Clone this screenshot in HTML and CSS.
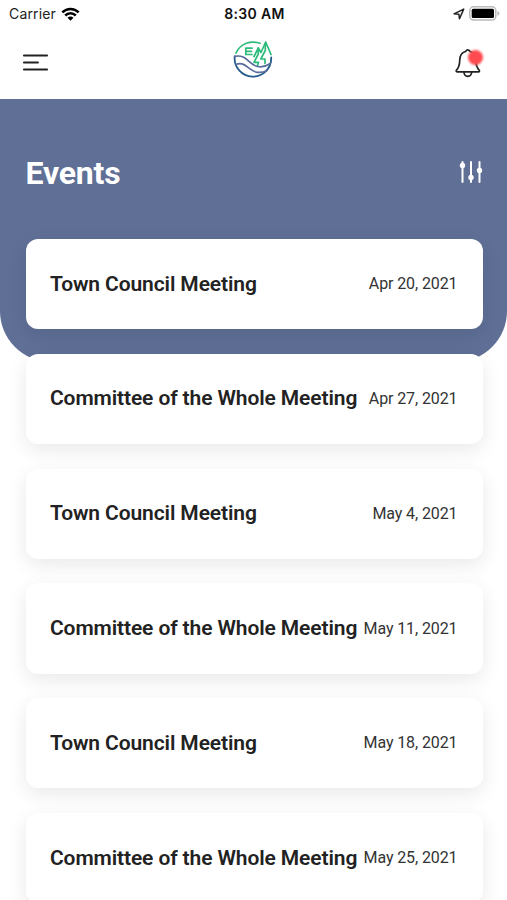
FILE: index.html
```html
<!DOCTYPE html>
<html lang="en">
<head>
  <meta charset="UTF-8" />
  <title>Events</title>
  <meta name="viewport" content="width=device-width, initial-scale=1.0"/>
  <link rel="stylesheet" href="styles.css">
</head>
<body>

  <!-- Status Bar -->
  <div class="status-bar">
    <div class="carrier">
      <span>Carrier</span>
      <svg class="wifi" viewBox="0 0 19 14" width="19" height="14">
        <g fill="none" stroke="#000" stroke-width="2.5">
          <path d="M1.300 5.400C6 .7 13 .7 17.700 5.400"/>
          <path d="M4.200 8.500C7.200 5.500 11.800 5.500 14.800 8.500"/>
        </g>
        <path d="M6.500 10.700Q9.500 8.300 12.500 10.700L9.500 13.700Z"/>
      </svg>
    </div>
    <div class="time">8:30 AM</div>
    <div class="indicators">
      <svg viewBox="0 0 12 12" width="12" height="12">
        <path d="M1 5.800 10.700 1.100 6.500 10.800 5.900 6.300Z" fill="none" stroke="#222" stroke-width="1.500" stroke-linejoin="round"/>
      </svg>
      <svg viewBox="0 0 31 15" width="31" height="15">
        <rect x=".8" y=".8" width="26" height="13.200" rx="3.800" fill="#fff" stroke="#bbb" stroke-width="1.500"/>
        <rect x="2.700" y="2.700" width="22.300" height="9.300" rx="1.500" fill="#000"/>
        <path d="M28.400 5Q30.500 5.800 30.500 7.400T28.400 9.800Z" fill="#bbb"/>
      </svg>
    </div>
  </div>

  <!-- Header -->
  <header>
    <svg class="menu-icon" viewBox="0 0 25 18" width="25" height="18">
      <path d="M.8 1.500H24.200M.8 8.500H15M.8 15.500H24.200" fill="none" stroke="#222" stroke-width="1.800" stroke-linecap="round"/>
    </svg>
    <svg class="brand-logo" viewBox="0 0 40 40" width="40" height="40">
      <g fill="none" stroke="#2dbb7c" stroke-width="1.700" stroke-linejoin="round" stroke-linecap="round">
        <path d="M3 13C7.500 3 18 .2 27 3.300"/>
        <path d="M19 8.200H12.800V14.500H19M12.800 11.300H18.500"/>
        <path d="M21 16.500 25.300 8V14L21 22.300H25.500L24.500 25.500"/>
        <path d="M25.300 8 28 12.500 32.700 2 38 14.500"/>
        <path d="M32.300 3.500V10.500L27.800 19H32V23.500"/>
      </g>
      <path d="M1.700 16.500A18.300 18.300 0 1 0 38.200 17.500" fill="none" stroke="#235a89" stroke-width="1.800" stroke-linecap="round"/>
      <g fill="none" stroke="#596c9c" stroke-width="1.700" stroke-linecap="round">
        <path d="M1.700 16.300C14 14 15 24.500 24.500 26.500Q31 27.800 37.300 23.500"/>
        <path d="M3 24.500C12 20.500 15.500 31 24 32.300Q29.500 33 34 30.500"/>
      </g>
    </svg>
    <div class="bell">
      <svg viewBox="0 0 26 30" width="26" height="30">
        <g fill="none" stroke="#222" stroke-width="1.700" stroke-linecap="round" stroke-linejoin="round">
          <path d="M10.500 3.500Q12.800 .3 15.100 3.500C19.300 4.700 20.900 8 20.900 12.500 20.900 18 22.300 20.300 24.300 22.300Q24.900 23.900 23.300 23.900H2.300Q.9 23.900 1.300 22.300C3.300 20.300 4.700 18 4.700 12.500 4.700 8 6.300 4.700 10.500 3.500Z"/>
          <path d="M8.900 24Q9.300 28.300 12.800 28.300T16.700 24"/>
        </g>
      </svg>
      <span class="badge"></span>
    </div>
  </header>

  <!-- Events -->
  <main>
    <div class="title-row">
      <h1>Events</h1>
      <svg viewBox="0 0 24 22" width="24" height="22">
        <path d="M3.500 1V21M12 1V21M20.500 1V21" stroke="#fff" stroke-width="2" stroke-linecap="round"/>
        <g fill="#fff">
          <circle cx="3.500" cy="4.500" r="2.700"/>
          <circle cx="12" cy="16.500" r="2.700"/>
          <circle cx="20.500" cy="9.500" r="2.700"/>
        </g>
      </svg>
    </div>
    <div class="event-list">
      <div class="card"><span class="name">Town Council Meeting</span><span class="date">Apr 20, 2021</span></div>
      <div class="card"><span class="name">Committee of the Whole Meeting</span><span class="date">Apr 27, 2021</span></div>
      <div class="card"><span class="name">Town Council Meeting</span><span class="date">May 4, 2021</span></div>
      <div class="card"><span class="name">Committee of the Whole Meeting</span><span class="date">May 11, 2021</span></div>
      <div class="card"><span class="name">Town Council Meeting</span><span class="date">May 18, 2021</span></div>
      <div class="card"><span class="name">Committee of the Whole Meeting</span><span class="date">May 25, 2021</span></div>
    </div>
  </main>

</body>
</html>
```
FILE: styles.css
```css
* { box-sizing: border-box; }
body {
  font-family: Roboto, sans-serif; background: #fff; color: #222;
  margin: 0; height: 900px; overflow: hidden;
}
svg { display: block; }

.status-bar {
  display: grid; grid-template-columns: 1fr auto 1fr; align-items: center;
  height: 27px; padding: 0 7px 0 9px;
  font-family: Inter, sans-serif; font-size: 14px;
}
.carrier { display: flex; align-items: center; gap: 5px; letter-spacing: 0.15px; }
.time { font-weight: 600; color: #111; letter-spacing: 0.35px; }
.indicators { display: flex; align-items: center; justify-content: flex-end; gap: 4px; }

header {
  display: flex; align-items: center; justify-content: space-between;
  height: 72px; padding: 0 26px 0 23px;
}
.brand-logo { margin: -7px 0 0 3px; }
.bell { position: relative; }
.badge {
  position: absolute; top: 2px; right: -2px; width: 15px; height: 15px;
  border-radius: 50%; background: #ff4b4f; filter: blur(1px);
}

main { position: relative; padding: 0 24.5px 0 25.500px; }
/* blue panel behind the title and the first card */
main::before {
  content: ""; position: absolute; z-index: -1; top: 0; left: 0; right: 0;
  height: 263px; background: #5f6f96; border-radius: 0 0 51px 51px;
}
.title-row {
  display: flex; align-items: center; justify-content: space-between;
  height: 140px; padding-top: 6px;
}
.title-row svg { margin-right: -0.5px; }
h1 { margin: 0; padding-top: 1px; font-size: 32px; font-weight: 700; letter-spacing: -0.2px; color: #fff; }

.event-list { display: flex; flex-direction: column; gap: 24.500px; }
.card {
  display: flex; align-items: center; justify-content: space-between;
  height: 90.300px; flex: none; padding: 0 25px 1px 24.500px;
  background: #fff; border-radius: 12px;
  box-shadow: 0 6px 20px rgba(0, 0, 0, 0.09);
  white-space: nowrap;
}
.name { font-size: 21px; font-weight: 600; letter-spacing: -0.11px; }
.date { font-size: 16px; letter-spacing: -0.1px; color: #333; }
```
